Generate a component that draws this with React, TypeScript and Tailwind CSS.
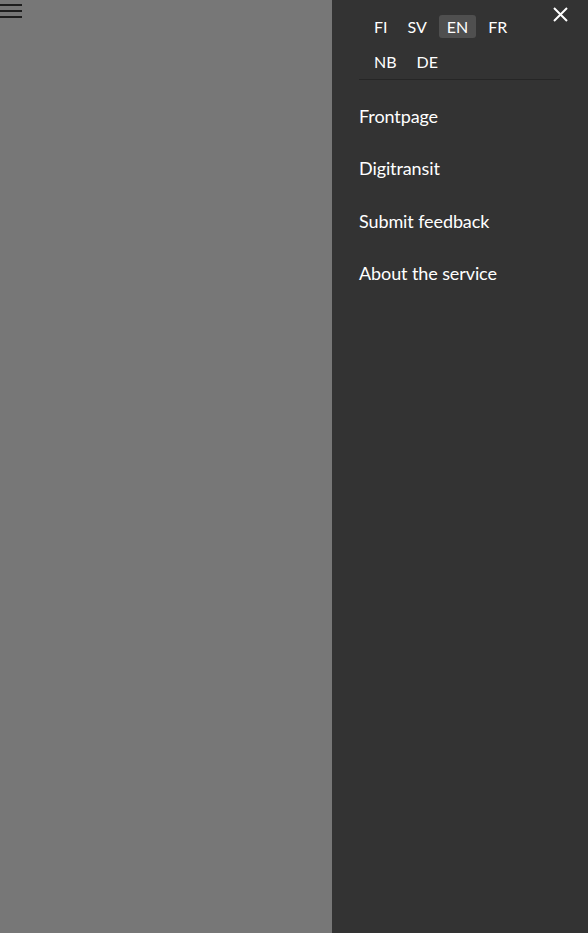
import React from "react";

const langs = ["FI", "SV", "EN", "FR", "NB", "DE"];
const items = ["Frontpage", "Digitransit", "Submit feedback", "About the service"];

export default function App() {
  return (
    <div className="flex h-[933px] w-[588px] overflow-hidden bg-[#777777]" style={{ fontFamily: "Lato, 'Open Sans', sans-serif" }}>
      <div className="relative flex-1">
        <div className="flex w-[22px] flex-col gap-[4px] pt-[4px]">
          <div className="h-[2px] bg-[#1e1e1e]" />
          <div className="h-[2px] bg-[#1e1e1e]" />
          <div className="h-[2px] bg-[#1e1e1e]" />
        </div>
      </div>
      <div className="relative flex w-[256px] flex-col bg-[#333333] pl-[27px] pr-[28px] text-white">
        <button className="absolute right-[20px] top-[7px] h-[15px] w-[15px]">
          <svg viewBox="0 0 15 15" width="15" height="15">
            <path d="M1 1L14 14M14 1L1 14" stroke="white" strokeWidth="2" />
          </svg>
        </button>
        <div className="border-b border-[#262626] pb-[6px]">
          <div className="flex w-[170px] flex-wrap gap-x-[4px] gap-y-[12px] pl-[7px] pt-[15px]">
            {langs.map((l) => (
              <span
                key={l}
                className={`flex h-[23px] items-center rounded-[3px] px-[8px] text-[16px] leading-none ${l === "EN" ? "bg-[#4f4f4f]" : ""}`}
              >
                {l}
              </span>
            ))}
          </div>
        </div>
        <div className="flex flex-col pt-[24px]">
          {items.map((t) => (
            <div key={t} className="h-[52.4px] text-[18px] leading-[24px] tracking-[-0.1px]">
              {t}
            </div>
          ))}
        </div>
      </div>
    </div>
  );
}
